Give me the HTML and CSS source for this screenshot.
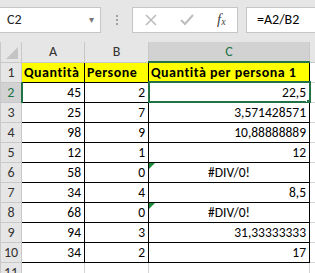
FILE: index.html
```html
<!DOCTYPE html>
<html lang="it">
<head>
    <meta charset="UTF-8">
    <title>Foglio1</title>
    <link rel="stylesheet" href="styles.css">
</head>
<body>
    <div class="formula-bar">
        <div class="name-box">C2<span class="drop">&#9662;</span></div>
        <div class="grip"><i></i><i></i><i></i></div>
        <div class="buttons">
            <svg class="ico" width="14" height="14" viewBox="0 0 14 14"><path d="M2 2 L12 12 M12 2 L2 12" stroke="#bdbdbd" stroke-width="1.6" fill="none"/></svg>
            <svg class="ico" width="16" height="14" viewBox="0 0 16 14"><path d="M2 7 L6 11 L14 2" stroke="#bdbdbd" stroke-width="2" fill="none"/></svg>
            <span class="fx">f<sub>x</sub></span>
        </div>
        <div class="formula">=A2/B2</div>
    </div>

    <table class="sheet">
        <colgroup>
            <col class="c-row"><col class="c-a"><col class="c-b"><col class="c-c"><col>
        </colgroup>
        <tr class="head">
            <th class="corner"><span class="tri"></span></th><th>A</th><th>B</th><th class="sel-col">C</th><th></th>
        </tr>
        <tr><th>1</th><td class="b hd">Quantità</td><td class="b hd">Persone</td><td class="b hd">Quantità per persona 1</td><td></td></tr>
        <tr><th class="sel-row">2</th><td class="b">45</td><td class="b">2</td><td class="b active">22,5<span class="handle"></span></td><td></td></tr>
        <tr><th>3</th><td class="b">25</td><td class="b">7</td><td class="b">3,571428571</td><td></td></tr>
        <tr><th>4</th><td class="b">98</td><td class="b">9</td><td class="b">10,88888889</td><td></td></tr>
        <tr><th>5</th><td class="b">12</td><td class="b">1</td><td class="b">12</td><td></td></tr>
        <tr><th>6</th><td class="b">58</td><td class="b">0</td><td class="b err">#DIV/0!<span class="flag"></span></td><td></td></tr>
        <tr><th>7</th><td class="b">34</td><td class="b">4</td><td class="b">8,5</td><td></td></tr>
        <tr><th>8</th><td class="b">68</td><td class="b">0</td><td class="b err">#DIV/0!<span class="flag"></span></td><td></td></tr>
        <tr><th>9</th><td class="b">94</td><td class="b">3</td><td class="b">31,33333333</td><td></td></tr>
        <tr><th>10</th><td class="b">34</td><td class="b">2</td><td class="b">17</td><td></td></tr>
        <tr><th>11</th><td></td><td></td><td></td><td></td></tr>
    </table>
</body>
</html>
```

FILE: styles.css
```css
body {
    margin: 0;
    font-family: Carlito, Lato, "Liberation Sans", sans-serif;
    font-size: 13.5px;
    color: #000;
    background: #fff;
    overflow: hidden;
}

.formula-bar {
    height: 42px;
    background: #e6e6e6;
    display: flex;
    align-items: center;
    box-sizing: border-box;
    padding-bottom: 3px;
}
.name-box {
    width: 101px;
    height: 26px;
    background: #fff;
    border: 1px solid #c6c6c6;
    border-left: none;
    display: flex;
    align-items: center;
    padding-left: 7px;
    box-sizing: border-box;
    font-size: 14px;
    color: #222;
}
.drop {
    margin-left: auto;
    margin-right: 6px;
    color: #777;
    font-size: 10px;
}
.grip {
    width: 31px;
    display: flex;
    flex-direction: column;
    align-items: center;
    gap: 2px;
}
.grip i {
    width: 2px;
    height: 2px;
    background: #a0a0a0;
}
.buttons {
    width: 106px;
    height: 26px;
    background: #fff;
    border: 1px solid #c6c6c6;
    box-sizing: border-box;
    display: flex;
    align-items: center;
    padding-left: 11px;
    gap: 21px;
}
.fx {
    font-family: "Liberation Serif", serif;
    font-style: italic;
    font-size: 15px;
    color: #444;
    margin-left: 1px;
}
.fx sub {
    font-size: 10px;
    vertical-align: -1px;
}
.formula {
    margin-left: 8px;
    flex: 1;
    height: 26px;
    background: #fff;
    border: 1px solid #c6c6c6;
    border-right: none;
    box-sizing: border-box;
    padding-left: 10px;
    display: flex;
    align-items: center;
    font-size: 14px;
}

.sheet {
    border-collapse: collapse;
    table-layout: fixed;
    width: 330px;
}
.c-row { width: 21px; }
.c-a { width: 63px; }
.c-b { width: 64px; }
.c-c { width: 161px; }

.sheet th, .sheet td {
    height: 20px;
    padding: 0 3px;
    border: 1px solid #d4d4d4;
    white-space: nowrap;
    overflow: hidden;
    box-sizing: border-box;
}
.sheet th {
    background: #e6e6e6;
    font-weight: normal;
    color: #333;
    text-align: center;
    padding: 0;
    border-color: #c8c8c8;
    font-size: 14px;
}
.sheet .head th {
    height: 20px;
    border-top: none;
}
.corner {
    position: relative;
}
.tri {
    position: absolute;
    right: 3px;
    bottom: 3px;
    width: 0;
    height: 0;
    border-left: 12px solid transparent;
    border-bottom: 12px solid #c4c4c4;
}
.sheet th.sel-col {
    background: #d2d2d2;
    color: #217346;
    border-bottom: 2px solid #217346;
}
.sheet th.sel-row {
    background: #d2d2d2;
    color: #217346;
    border-right: 2px solid #217346;
}

.sheet td {
    text-align: right;
}
.sheet td.b {
    border: 1px solid #000;
}
.sheet td.hd {
    background: #ffff00;
    font-weight: bold;
    font-size: 14px;
    letter-spacing: 0.5px;
    text-align: left;
    padding-left: 2px;
}
.sheet td.err {
    text-align: center;
    position: relative;
}
.flag {
    position: absolute;
    left: 0;
    top: 0;
    width: 0;
    height: 0;
    border-top: 6px solid #1e8b3a;
    border-right: 6px solid transparent;
}
.sheet td.active {
    position: relative;
    outline: 2px solid #217346;
    outline-offset: -1px;
}
.handle {
    position: absolute;
    right: -4px;
    bottom: -4px;
    width: 5px;
    height: 5px;
    background: #217346;
    border: 1px solid #fff;
    z-index: 2;
}
```
